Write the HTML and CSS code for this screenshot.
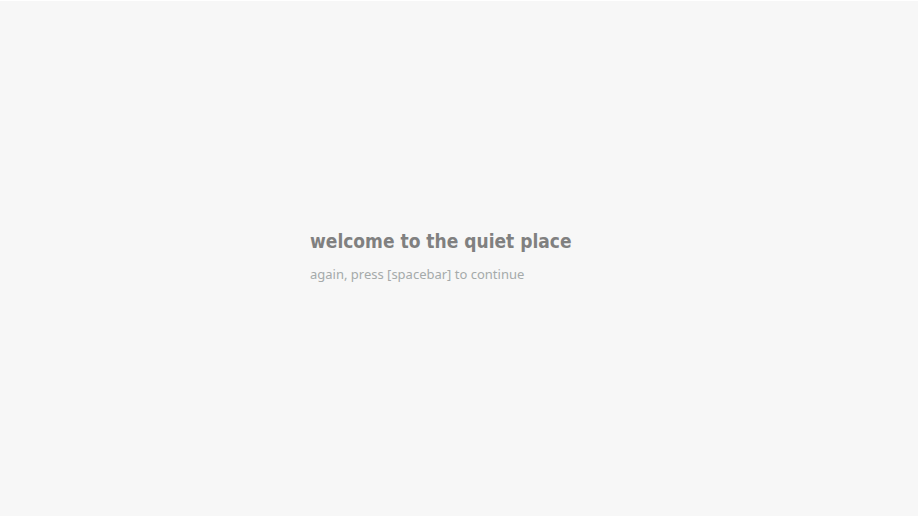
FILE: index.html
```html
<!DOCTYPE html>
<html lang="en">
<head>
    <meta charset="UTF-8">
    <meta name="viewport" content="width=device-width, initial-scale=1.0">
    <title>the quiet place</title>
    <link rel="stylesheet" href="styles.css">
</head>
<body>
    <div class="container">
        <h1>welcome to the quiet place</h1>
        <p>again, press [spacebar] to continue</p>
    </div>
</body>
</html>
```

FILE: styles.css
```css
body {
    margin: 0;
    min-height: 100vh;
    box-sizing: border-box;
    display: flex;
    align-items: center;
    justify-content: center;
    background-color: #f7f7f7;
    border-top: 1px solid #fff;
    font-family: Tahoma, "Noto Sans", sans-serif;
}
.container {
    width: 298px;
    padding-bottom: 6px;
}
h1 {
    margin: 0 0 12px;
    font-family: Tahoma, "DejaVu Sans Condensed", sans-serif;
    font-size: 19px;
    line-height: 24px;
    color: #808080;
}
p {
    margin: 0;
    font-size: 13px;
    line-height: 18px;
    color: #a5aaaa;
}
```
